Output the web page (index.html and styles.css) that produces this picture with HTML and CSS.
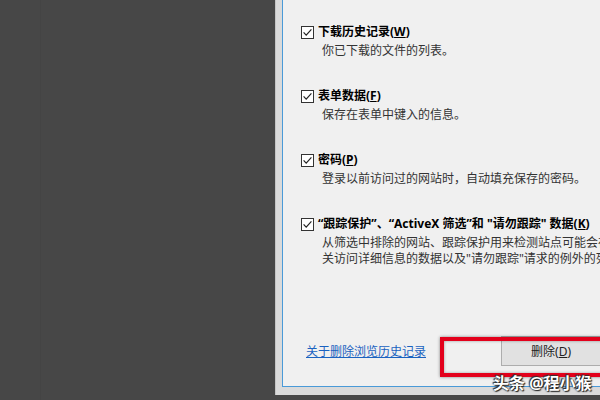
FILE: index.html
```
<!DOCTYPE html>
<html lang="zh-CN">
<head>
<meta charset="utf-8">
<title>删除浏览历史记录</title>
<link rel="stylesheet" href="styles.css">
</head>
<body>
<div class="desk">
  <div class="dark-pane"><div class="dark-col"></div></div>
  <div class="behind">
    <div class="dialog">
      <div class="options">
        <div class="opt">
          <div class="opt-title"><span class="cb"><svg viewBox="0 0 13 13" width="13" height="13"><path d="M2.6 6.4 L5.2 9.1 L10.4 3.4" fill="none" stroke="#222" stroke-width="1.2"/></svg></span><span>下载历史记录(<u>W</u>)</span></div>
          <div class="opt-desc">你已下载的文件的列表。</div>
        </div>
        <div class="opt">
          <div class="opt-title"><span class="cb"><svg viewBox="0 0 13 13" width="13" height="13"><path d="M2.6 6.4 L5.2 9.1 L10.4 3.4" fill="none" stroke="#222" stroke-width="1.2"/></svg></span><span>表单数据(<u>F</u>)</span></div>
          <div class="opt-desc">保存在表单中键入的信息。</div>
        </div>
        <div class="opt">
          <div class="opt-title"><span class="cb"><svg viewBox="0 0 13 13" width="13" height="13"><path d="M2.6 6.4 L5.2 9.1 L10.4 3.4" fill="none" stroke="#222" stroke-width="1.2"/></svg></span><span>密码(<u>P</u>)</span></div>
          <div class="opt-desc">登录以前访问过的网站时，自动填充保存的密码。</div>
        </div>
        <div class="opt">
          <div class="opt-title"><span class="cb"><svg viewBox="0 0 13 13" width="13" height="13"><path d="M2.6 6.4 L5.2 9.1 L10.4 3.4" fill="none" stroke="#222" stroke-width="1.2"/></svg></span><span>“跟踪保护”、“ActiveX 筛选”和 "请勿跟踪" 数据(<u>K</u>)</span></div>
          <div class="opt-desc">从筛选中排除的网站、跟踪保护用来检测站点可能会在何时自动共享有</div>
          <div class="opt-desc opt-desc-cont">关访问详细信息的数据以及"请勿跟踪"请求的例外的列表。</div>
        </div>
      </div>
      <div class="footer">
        <a class="link" href="#">关于删除浏览历史记录</a>
        <button class="btn" type="button">删除(<u>D</u>)</button>
      </div>
    </div>
  </div>
</div>
<div class="highlight"></div>
<div class="watermark">头条 @程小猴</div>
</body>
</html>
```
FILE: styles.css
```
html, body {
  margin: 0;
  padding: 0;
}
body {
  width: 600px;
  height: 400px;
  overflow: hidden;
  background: #474747;
  font-family: "Noto Sans", "Noto Sans CJK SC", sans-serif;
  font-size: 12px;
  position: relative;
}
.desk {
  display: flex;
  height: 400px;
}
.dark-pane {
  width: 275px;
  flex: none;
  display: flex;
}
.dark-col {
  width: 40px;
  border-right: 1px solid #444;
  background: #474747;
}
.behind {
  flex: 1;
  height: 395px;
  background: #dadada;
  padding-left: 6px;
  box-sizing: border-box;
  overflow: hidden;
  border-left: 1px solid #c4c4c4;
}
.dialog {
  height: 387px;
  box-sizing: border-box;
  background: #f0f0f0;
  border-left: 1px solid #4a9ad8;
  border-bottom: 1px solid #4a9ad8;
  display: flex;
  flex-direction: column;
  padding-bottom: 20px;
  width: 330px;
  overflow: hidden;
}
.options {
  padding: 23px 0 0 18px;
  display: flex;
  flex-direction: column;
  gap: 28px;
}
.opt-title {
  display: flex;
  align-items: center;
  height: 18px;
  line-height: 18px;
  font-weight: bold;
  color: #000;
  white-space: nowrap;
}
.cb {
  width: 13px;
  height: 13px;
  box-sizing: border-box;
  border: 1px solid #333;
  background: #fff;
  margin-right: 4px;
  display: flex;
  flex: none;
}
.cb svg {
  margin: -1px;
}
.opt-desc {
  margin-top: 2px;
  padding-left: 21px;
  line-height: 16px;
  color: #333;
  white-space: nowrap;
}
.opt-desc-cont {
  margin-top: 0;
}
.footer {
  margin-top: auto;
  display: flex;
  align-items: center;
  height: 30px;
  padding-left: 23px;
}
.link {
  color: #1a62c0;
  text-decoration: underline;
  white-space: nowrap;
}
.btn {
  margin-left: 75px;
  width: 100px;
  height: 30px;
  flex: none;
  background: #e1e1e1;
  border: 1px solid #adadad;
  font-family: inherit;
  font-size: 12px;
  color: #222;
  padding: 0;
}
.highlight {
  position: absolute;
  left: 440px;
  top: 337px;
  width: 180px;
  height: 40px;
  box-sizing: border-box;
  border: 4px solid #e3001b;
  box-shadow: 0 0 3px rgba(0, 0, 0, 0.45), inset 0 0 3px rgba(0, 0, 0, 0.35);
}
.watermark {
  position: absolute;
  left: 493px;
  top: 372px;
  font-size: 16px;
  line-height: 22px;
  font-weight: bold;
  color: #fff;
  white-space: nowrap;
  text-shadow: 0 0 2px #222, 1px 1px 1px #222, -1px -1px 1px #333;
}
```
